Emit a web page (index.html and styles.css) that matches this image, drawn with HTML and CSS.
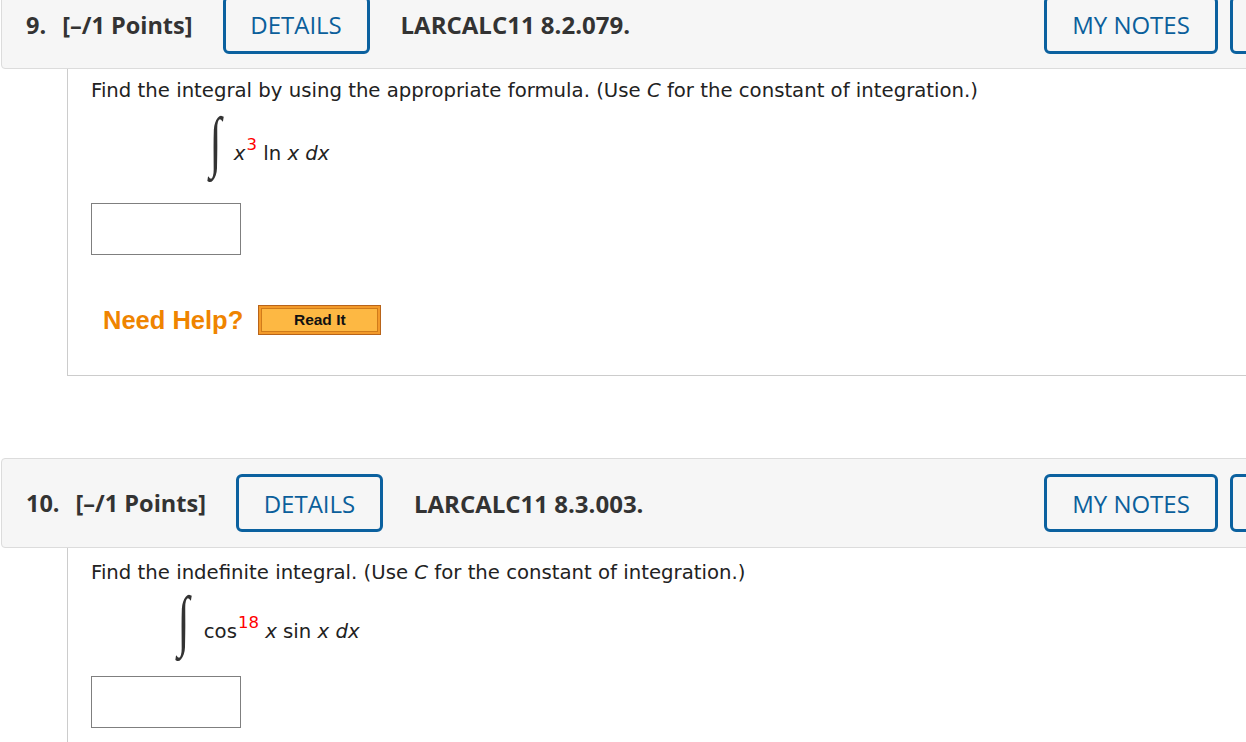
FILE: index.html
```html
<!DOCTYPE html>
<html>
<head>
<meta charset="utf-8">
<link rel="stylesheet" href="styles.css">
</head>
<body>
<div class="page">
  <div class="question q9">
    <div class="qhead">
      <span class="qnum">9.</span>
      <span class="qpts">[–/1 Points]</span>
      <span class="btn details">DETAILS</span>
      <span class="qid">LARCALC11 8.2.079.</span>
      <span class="btn notes">MY NOTES</span>
      <span class="btn stub"></span>
    </div>
    <div class="qbody">
      <p class="prompt">Find the integral by using the appropriate formula. (Use <i>C</i> for the constant of integration.)</p>
      <div class="math m1">
        <span class="int">∫</span>
        <span class="expr"><i>x</i><sup>3</sup> ln <i>x</i> <i>dx</i></span>
      </div>
      <div class="answer"></div>
      <div class="help">
        <span class="need">Need Help?</span>
        <span class="readit"><span class="readit-in">Read It</span></span>
      </div>
    </div>
  </div>

  <div class="question q10">
    <div class="qhead">
      <span class="qnum">10.</span>
      <span class="qpts">[–/1 Points]</span>
      <span class="btn details">DETAILS</span>
      <span class="qid">LARCALC11 8.3.003.</span>
      <span class="btn notes">MY NOTES</span>
      <span class="btn stub"></span>
    </div>
    <div class="qbody">
      <p class="prompt">Find the indefinite integral. (Use <i>C</i> for the constant of integration.)</p>
      <div class="math m2">
        <span class="int">∫</span>
        <span class="expr">cos<sup>18</sup> <i>x</i> sin <i>x</i> <i>dx</i></span>
      </div>
      <div class="answer"></div>
    </div>
  </div>
</div>
</body>
</html>
```

FILE: styles.css
```css
html, body {
  margin: 0;
  padding: 0;
  background: #fff;
  overflow: hidden;
}

.page {
  width: 1270px;
  padding-left: 1px;
}

.question {
  display: flex;
  flex-direction: column;
}

.q9 {
  margin-top: -21px;
}

.q10 {
  margin-top: 82px;
}

.qhead {
  box-sizing: border-box;
  height: 90px;
  display: flex;
  align-items: center;
  padding-left: 24px;
  background: #f6f6f6;
  border: 1px solid #dcdcdc;
  border-radius: 4px;
  font-family: "Open Sans", sans-serif;
  color: #333;
  font-size: 23.5px;
  font-weight: 700;
}

.q9 .qhead {
  padding-top: 1px;
}

.qnum {
  margin-right: 16px;
}

.qpts {
  margin-right: 30px;
}

.btn {
  box-sizing: border-box;
  height: 58px;
  display: flex;
  align-items: center;
  justify-content: center;
  border: 3px solid #0b619f;
  border-radius: 6px;
  color: #0b5f9b;
  font-weight: 400;
  font-size: 24px;
}

.details {
  width: 147px;
  margin-right: 31px;
}

.qid {
  font-size: 24px;
}

.notes {
  width: 174px;
  margin-left: auto;
}

.stub {
  width: 40px;
  margin-left: 12px;
}

.qbody {
  margin-left: 66px;
  border-left: 1px solid #cccccc;
  border-bottom: 1px solid #cccccc;
  padding: 9px 0 0 23px;
  font-family: Verdana, "DejaVu Sans", sans-serif;
  color: #222;
  font-size: 19.7px;
}

.q9 .qbody {
  height: 297px;
}

.q10 .qbody {
  padding-top: 12px;
  height: 300px;
}

.prompt {
  margin: 0;
  line-height: 26px;
}

.math {
  display: flex;
  align-items: center;
  height: 64px;
  margin-top: 15px;
}

.q10 .math {
  margin-top: 12px;
}

.m1 {
  padding-left: 117px;
}

.m2 {
  padding-left: 85px;
}

.int {
  font-family: "Liberation Serif", serif;
  font-size: 54px;
  color: #333;
  font-weight: 400;
  transform: translateY(-10px) scale(0.8, 1.25);
  margin-right: 11px;
}

.m2 .int {
  margin-right: 13px;
}

.expr {
  padding-top: 4px;
}

.m2 .expr {
  padding-top: 2px;
}

.expr sup {
  color: #ff0000;
  font-size: 16.5px;
  vertical-align: 10px;
  line-height: 0;
  font-family: Verdana, "DejaVu Sans", sans-serif;
  margin-left: 1px;
}

.answer {
  box-sizing: border-box;
  width: 150px;
  height: 52px;
  border: 1px solid #7f7f7f;
  margin-top: 20px;
}

.m2 + .answer {
  margin-top: 14px;
}

.help {
  display: flex;
  align-items: center;
  margin-top: 50px;
  padding-left: 12px;
}

.need {
  font-family: "Liberation Sans", Arial, sans-serif;
  font-weight: 700;
  font-size: 25.5px;
  color: #ef8400;
  margin-right: 15px;
}

.readit {
  box-sizing: border-box;
  width: 123px;
  height: 30px;
  border: 1px solid #b8641a;
  background: #f39a2a;
  padding: 2px;
  display: flex;
}

.readit-in {
  flex: 1;
  border: 1px solid #d07b1a;
  background: #fdb843;
  display: flex;
  align-items: center;
  justify-content: center;
  font-family: "Liberation Sans", Arial, sans-serif;
  font-weight: 700;
  font-size: 15.5px;
  color: #111;
}
```
